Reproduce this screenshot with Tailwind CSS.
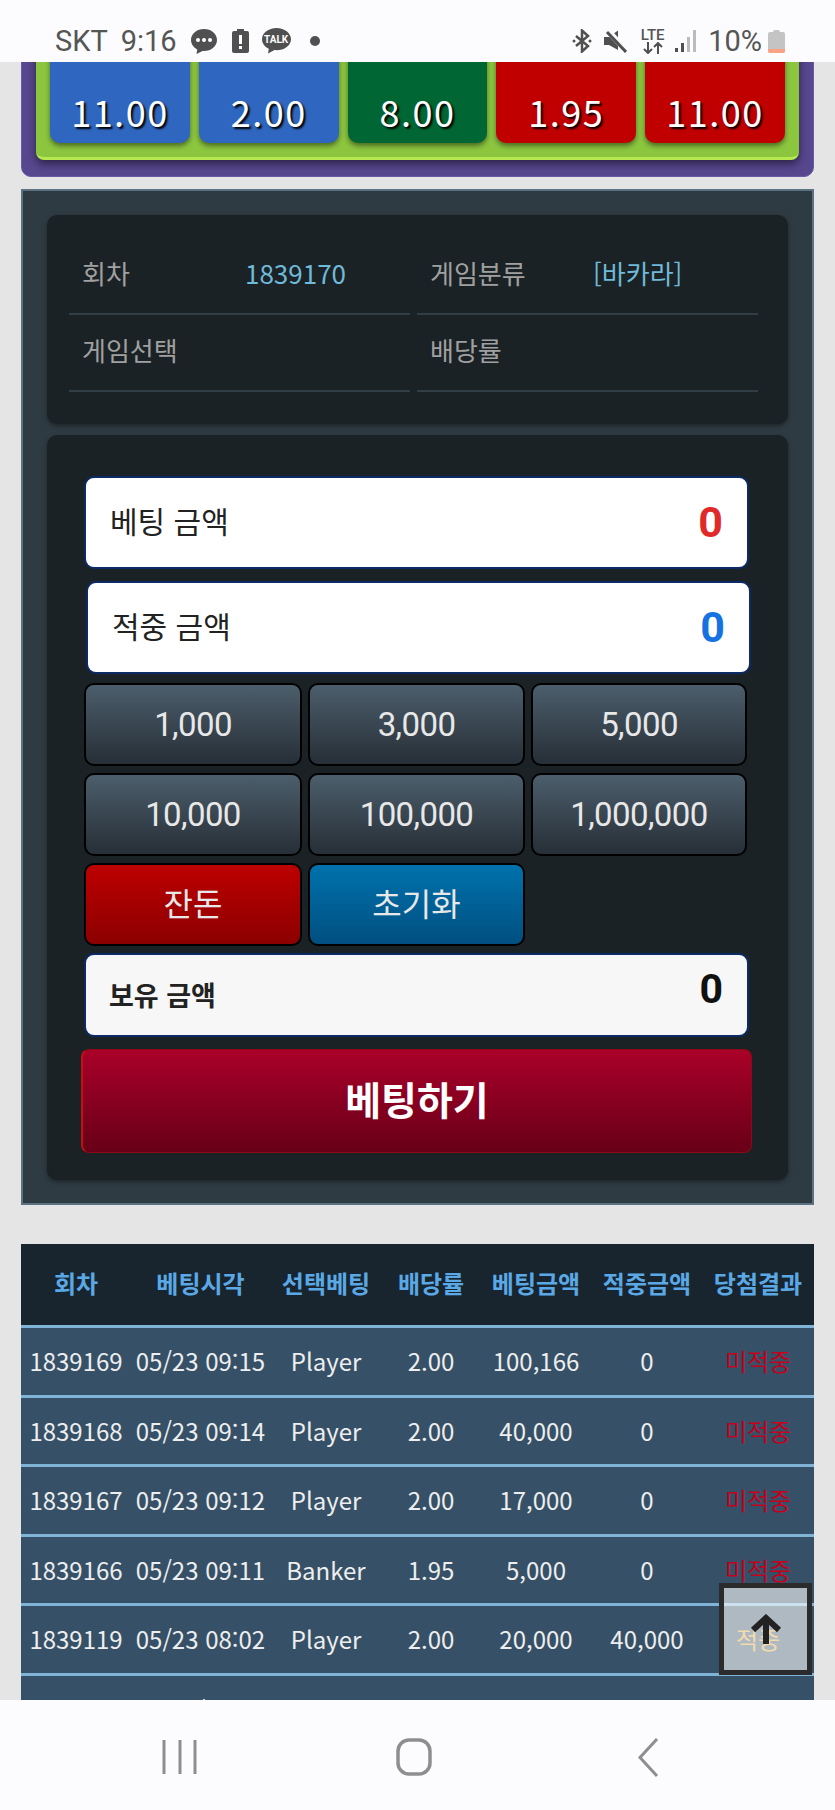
<!DOCTYPE html>
<html lang="ko">
<head>
  <meta charset="UTF-8" />
  <title>베팅</title>
  <script src="https://cdn.jsdelivr.net/npm/@tailwindcss/browser@4"></script>
</head>
<body class="bg-[#e5e5e5] [font-family:'Noto_Sans_CJK_KR',sans-serif]">
<div class="h-[1810px] flex flex-col overflow-hidden">

  <!-- status bar -->
  <header class="h-[62px] shrink-0 bg-[#fcfcfe] flex items-center justify-between pl-[55px] pr-[50px] pt-[20px] text-[#555] [font-family:Roboto,sans-serif] text-[29px] z-10">
    <div class="flex items-center">
      <span class="leading-none">SKT</span>
      <span class="leading-none ml-[13px]">9:16</span>
      <svg class="ml-[13px]" width="28" height="27" viewBox="0 0 28 27"><path d="M14 1C6.8 1 1 5.800 1 12c0 4 2.500 7.400 6.200 9.400L6.500 26l6-3.100c.5 0 1 .1 1.500.1 7.200 0 13-4.800 13-11S21.200 1 14 1z" fill="#505050"/><circle cx="8" cy="12" r="2" fill="#fff"/><circle cx="14" cy="12" r="2" fill="#fff"/><circle cx="20" cy="12" r="2" fill="#fff"/></svg>
      <svg class="ml-[14px]" width="17" height="24" viewBox="0 0 17 24"><path d="M5 0h7v2h3a2 2 0 0 1 2 2v18a2 2 0 0 1-2 2H2a2 2 0 0 1-2-2V4a2 2 0 0 1 2-2h3z" fill="#505050"/><rect x="7" y="6" width="3" height="9" fill="#fff"/><rect x="7" y="17" width="3" height="3" fill="#fff"/></svg>
      <div class="ml-[13px] relative w-[29px] h-[26px]">
        <svg width="29" height="26" viewBox="0 0 29 26"><path d="M14.500 0C6.500 0 0 5 0 11.200c0 4 2.700 7.500 6.800 9.500L6 25.500l6.500-3.400c.7.1 1.300.1 2 .1 8 0 14.500-4.900 14.500-11S22.500 0 14.500 0z" fill="#505050"/></svg>
        <span class="absolute left-0 right-0 top-[5px] text-center text-[10px] leading-[13px] font-bold text-white">TALK</span>
      </div>
      <span class="ml-[19px] w-[10px] h-[10px] rounded-full bg-[#505050]"></span>
    </div>
    <div class="flex items-center">
      <svg width="20" height="24" viewBox="0 0 20 24" fill="none" stroke="#505050" stroke-width="2.500"><path d="M4 7l12 10-6 5.500V1.500L16 7 4 17"/><circle cx="2" cy="12" r="1.500" fill="#505050" stroke="none"/><circle cx="18" cy="12" r="1.500" fill="#505050" stroke="none"/></svg>
      <svg class="ml-[12px]" width="23" height="23" viewBox="0 0 23 23"><path d="M0 7h5l9-6.500V20L5 15H0z" fill="#505050"/><path d="M3 0l20 21" stroke="#fcfcfe" stroke-width="6"/><path d="M3 2l19 20" stroke="#505050" stroke-width="3"/></svg>
      <div class="ml-[13px] w-[25px] flex flex-col items-center">
        <span class="text-[15px] leading-[13px] font-medium">LTE</span>
        <svg width="22" height="12" viewBox="0 0 22 12" fill="none" stroke="#505050" stroke-width="2"><path d="M6 0v11M2 7l4 4 4-4M16 12V1M12 5l4-4 4 4"/></svg>
      </div>
      <svg class="ml-[10px]" width="21" height="24" viewBox="0 0 21 24"><rect x="0" y="19" width="3" height="4" fill="#505050"/><rect x="6" y="14" width="3" height="9" fill="#505050"/><rect x="12" y="8" width="3" height="15" fill="#bbb"/><rect x="18" y="1" width="3" height="22" fill="#bbb"/></svg>
      <span class="ml-[12px] leading-none">10%</span>
      <div class="ml-[6px] w-[17px] h-[23px] flex flex-col items-center">
        <span class="w-[7px] h-[2px] bg-[#c4c4c4] rounded-t-sm"></span>
        <div class="w-full flex-1 bg-[#c4c4c4] rounded-[2px] overflow-hidden flex flex-col justify-end"><span class="h-[4px] bg-[#f9a184]"></span></div>
      </div>
    </div>
  </header>

  <main class="flex-1 overflow-hidden relative">
    <div class="-mt-[33px]">

      <!-- odds -->
      <section class="mx-[21px] bg-[#57478f] rounded-b-[10px] px-[14px] pb-[16px] border border-[#6a5aa6]">
        <div class="bg-[#8cc63f] border-b-[3px] border-[#b6e850] rounded-b-[8px] px-[14px] pb-[14px] flex gap-[9px] text-white text-[36px] tracking-[1.500px] shadow-[0_4px_8px_rgba(0,0,0,0.5)] [text-shadow:2px_2px_2px_#000]">
          <div class="flex-1 h-[113px] bg-[#2f66bf] rounded-[10px] flex items-end justify-center pb-[10px] leading-[44px] shadow-[0_3px_5px_rgba(0,0,0,0.45)]">11.00</div>
          <div class="flex-1 h-[113px] bg-[#2f66bf] rounded-[10px] flex items-end justify-center pb-[10px] leading-[44px] shadow-[0_3px_5px_rgba(0,0,0,0.45)]">2.00</div>
          <div class="flex-1 h-[113px] bg-[#006633] rounded-[10px] flex items-end justify-center pb-[10px] leading-[44px] shadow-[0_3px_5px_rgba(0,0,0,0.45)]">8.00</div>
          <div class="flex-1 h-[113px] bg-[#c00000] rounded-[10px] flex items-end justify-center pb-[10px] leading-[44px] shadow-[0_3px_5px_rgba(0,0,0,0.45)]">1.95</div>
          <div class="flex-1 h-[113px] bg-[#c00000] rounded-[10px] flex items-end justify-center pb-[10px] leading-[44px] shadow-[0_3px_5px_rgba(0,0,0,0.45)]">11.00</div>
        </div>
      </section>

      <!-- bet panel -->
      <section class="mx-[21px] mt-[12px] bg-[#2f3b43] border-2 border-[#5b7282] px-[24px] pt-[24px] pb-[23px]">
        <div class="bg-[#1b2226] rounded-[10px] pl-[22px] pr-[30px] pt-[23px] h-[209px] shadow-[0_2px_5px_rgba(0,0,0,0.4)] grid grid-cols-2 gap-x-[7px] auto-rows-[77px] text-[26px] text-[#a0a0a0]">
          <div class="flex items-center pb-[6px] border-b-2 border-[#323e46]">
            <span class="w-[176px] pl-[13px]">회차</span><span class="text-[#6fb9d9]">1839170</span>
          </div>
          <div class="flex items-center pb-[6px] border-b-2 border-[#323e46]">
            <span class="w-[176px] pl-[13px]">게임분류</span><span class="text-[#6fb9d9]">[바카라]</span>
          </div>
          <div class="flex items-center pb-[6px] border-b-2 border-[#323e46]">
            <span class="w-[176px] pl-[13px]">게임선택</span>
          </div>
          <div class="flex items-center pb-[6px] border-b-2 border-[#323e46]">
            <span class="w-[176px] pl-[13px]">배당률</span>
          </div>
        </div>

        <div class="mt-[11px] bg-[#1b2226] rounded-[10px] pl-[37px] pt-[41px] pb-[27px] shadow-[0_2px_5px_rgba(0,0,0,0.4)]">
          <div class="w-[665px] h-[93px] bg-white border-2 border-[#0c2a66] rounded-[10px] flex items-center justify-between pl-[24px] pr-[24px] text-[#222] text-[30px]">
            <span class="pb-[5px]">베팅 금액</span>
            <span class="[font-family:Roboto,sans-serif] font-bold text-[43px] text-[#e02a2a]">0</span>
          </div>
          <div class="ml-[2px] mt-[12px] w-[665px] h-[93px] bg-white border-2 border-[#0c2a66] rounded-[10px] flex items-center justify-between pl-[24px] pr-[24px] text-[#222] text-[30px]">
            <span class="pb-[5px]">적중 금액</span>
            <span class="[font-family:Roboto,sans-serif] font-bold text-[43px] text-[#1672e0]">0</span>
          </div>

          <div class="mt-[9px] grid grid-cols-[218px_217px_216px] gap-x-[6px] gap-y-[7px] auto-rows-[83px] [font-family:Roboto,'Noto_Sans_CJK_KR',sans-serif] text-[33px] tracking-[-0.6px] text-[#e8e8e8]">
            <button class="rounded-[10px] border-2 border-black bg-gradient-to-b from-[#4c5e6c] to-[#272f37]">1,000</button>
            <button class="rounded-[10px] border-2 border-black bg-gradient-to-b from-[#4c5e6c] to-[#272f37]">3,000</button>
            <button class="rounded-[10px] border-2 border-black bg-gradient-to-b from-[#4c5e6c] to-[#272f37]">5,000</button>
            <button class="rounded-[10px] border-2 border-black bg-gradient-to-b from-[#4c5e6c] to-[#272f37]">10,000</button>
            <button class="rounded-[10px] border-2 border-black bg-gradient-to-b from-[#4c5e6c] to-[#272f37]">100,000</button>
            <button class="rounded-[10px] border-2 border-black bg-gradient-to-b from-[#4c5e6c] to-[#272f37]">1,000,000</button>
            <button class="rounded-[10px] border-2 border-black bg-gradient-to-b from-[#bd0000] to-[#8c0000] text-[32px] tracking-normal">잔돈</button>
            <button class="rounded-[10px] border-2 border-black bg-gradient-to-b from-[#0072ad] to-[#004f80] text-[32px] tracking-normal">초기화</button>
          </div>

          <div class="mt-[7px] w-[665px] h-[84px] bg-[#f7f7f7] border-2 border-[#0c2a66] rounded-[10px] flex items-center justify-between pl-[23px] pr-[24px] text-[#222]">
            <span class="font-bold text-[27px]">보유 금액</span>
            <span class="[font-family:Roboto,sans-serif] font-bold text-[41px] text-[#111] leading-none pb-[12px]">0</span>
          </div>

          <button class="-ml-[3px] mt-[12px] pb-[5px] block w-[671px] h-[104px] rounded-[8px] border border-[#8c0a14] border-l-2 border-l-[#c41010] bg-gradient-to-b from-[#aa0029] to-[#680018] text-white font-bold text-[39px]">베팅하기</button>
        </div>
      </section>

      <!-- history -->
      <section class="mx-[21px] mt-[39px]">
        <table class="w-[793px] table-fixed border-separate border-spacing-0 text-center text-[24px] text-[#eeeeee]">
          <colgroup>
            <col class="w-[110px]" /><col class="w-[139px]" /><col class="w-[112px]" /><col class="w-[98px]" /><col class="w-[112px]" /><col class="w-[110px]" /><col class="w-[112px]" />
          </colgroup>
          <thead class="bg-[#19252e] text-[#5aa9e6]">
            <tr class="h-[84px]">
              <th class="font-bold border-b-[3px] border-[#7fb4d6] pb-[4px]">회차</th>
              <th class="font-bold border-b-[3px] border-[#7fb4d6] pb-[4px]">베팅시각</th>
              <th class="font-bold border-b-[3px] border-[#7fb4d6] pb-[4px]">선택베팅</th>
              <th class="font-bold border-b-[3px] border-[#7fb4d6] pb-[4px]">배당률</th>
              <th class="font-bold border-b-[3px] border-[#7fb4d6] pb-[4px]">베팅금액</th>
              <th class="font-bold border-b-[3px] border-[#7fb4d6] pb-[4px]">적중금액</th>
              <th class="font-bold border-b-[3px] border-[#7fb4d6] pb-[4px]">당첨결과</th>
            </tr>
          </thead>
          <tbody class="bg-[#365167]">
            <tr class="h-[69.500px]">
              <td class="border-b-[3px] border-[#7fb4d6]">1839169</td><td class="border-b-[3px] border-[#7fb4d6]">05/23 09:15</td><td class="border-b-[3px] border-[#7fb4d6]">Player</td><td class="border-b-[3px] border-[#7fb4d6]">2.00</td><td class="border-b-[3px] border-[#7fb4d6]">100,166</td><td class="border-b-[3px] border-[#7fb4d6]">0</td><td class="border-b-[3px] border-[#7fb4d6] text-[#c4001c]">미적중</td>
            </tr>
            <tr class="h-[69.500px]">
              <td class="border-b-[3px] border-[#7fb4d6]">1839168</td><td class="border-b-[3px] border-[#7fb4d6]">05/23 09:14</td><td class="border-b-[3px] border-[#7fb4d6]">Player</td><td class="border-b-[3px] border-[#7fb4d6]">2.00</td><td class="border-b-[3px] border-[#7fb4d6]">40,000</td><td class="border-b-[3px] border-[#7fb4d6]">0</td><td class="border-b-[3px] border-[#7fb4d6] text-[#c4001c]">미적중</td>
            </tr>
            <tr class="h-[69.500px]">
              <td class="border-b-[3px] border-[#7fb4d6]">1839167</td><td class="border-b-[3px] border-[#7fb4d6]">05/23 09:12</td><td class="border-b-[3px] border-[#7fb4d6]">Player</td><td class="border-b-[3px] border-[#7fb4d6]">2.00</td><td class="border-b-[3px] border-[#7fb4d6]">17,000</td><td class="border-b-[3px] border-[#7fb4d6]">0</td><td class="border-b-[3px] border-[#7fb4d6] text-[#c4001c]">미적중</td>
            </tr>
            <tr class="h-[69.500px]">
              <td class="border-b-[3px] border-[#7fb4d6]">1839166</td><td class="border-b-[3px] border-[#7fb4d6]">05/23 09:11</td><td class="border-b-[3px] border-[#7fb4d6]">Banker</td><td class="border-b-[3px] border-[#7fb4d6]">1.95</td><td class="border-b-[3px] border-[#7fb4d6]">5,000</td><td class="border-b-[3px] border-[#7fb4d6]">0</td><td class="border-b-[3px] border-[#7fb4d6] text-[#c4001c]">미적중</td>
            </tr>
            <tr class="h-[69.500px]">
              <td class="border-b-[3px] border-[#7fb4d6]">1839119</td><td class="border-b-[3px] border-[#7fb4d6]">05/23 08:02</td><td class="border-b-[3px] border-[#7fb4d6]">Player</td><td class="border-b-[3px] border-[#7fb4d6]">2.00</td><td class="border-b-[3px] border-[#7fb4d6]">20,000</td><td class="border-b-[3px] border-[#7fb4d6]">40,000</td><td class="border-b-[3px] border-[#7fb4d6] text-[#e0a530]">적중</td>
            </tr>
            <tr class="h-[69.500px]">
              <td></td><td>05/23</td><td></td><td></td><td></td><td></td><td></td>
            </tr>
          </tbody>
        </table>
      </section>
    </div>

    <!-- back to top -->
    <a class="absolute left-[719px] top-[1521px] w-[93px] h-[92px] border-[5px] border-[#2b2b2b] bg-white/60 flex items-center justify-center">
      <svg width="32" height="30" viewBox="0 0 32 30" fill="none" stroke="#222" stroke-width="6"><path d="M16 30V4M3 16L16 4l13 12"/></svg>
    </a>
  </main>

  <!-- android nav -->
  <nav class="h-[110px] shrink-0 bg-[#fcfcfe] relative z-10">
    <svg class="absolute left-[160px] top-[38px]" width="40" height="38" viewBox="0 0 40 38" fill="none" stroke="#8e8e8e" stroke-width="3"><path d="M4 2v34M20 2v34M35 2v34"/></svg>
    <svg class="absolute left-[395px] top-[37px]" width="38" height="40" viewBox="0 0 38 40" fill="none" stroke="#8e8e8e" stroke-width="3.500"><rect x="3" y="3" width="32" height="34" rx="11"/></svg>
    <svg class="absolute left-[634px] top-[37px]" width="28" height="41" viewBox="0 0 28 41" fill="none" stroke="#8e8e8e" stroke-width="3"><path d="M23 2L6 20.500 23 39"/></svg>
  </nav>
</div>
</body>
</html>
